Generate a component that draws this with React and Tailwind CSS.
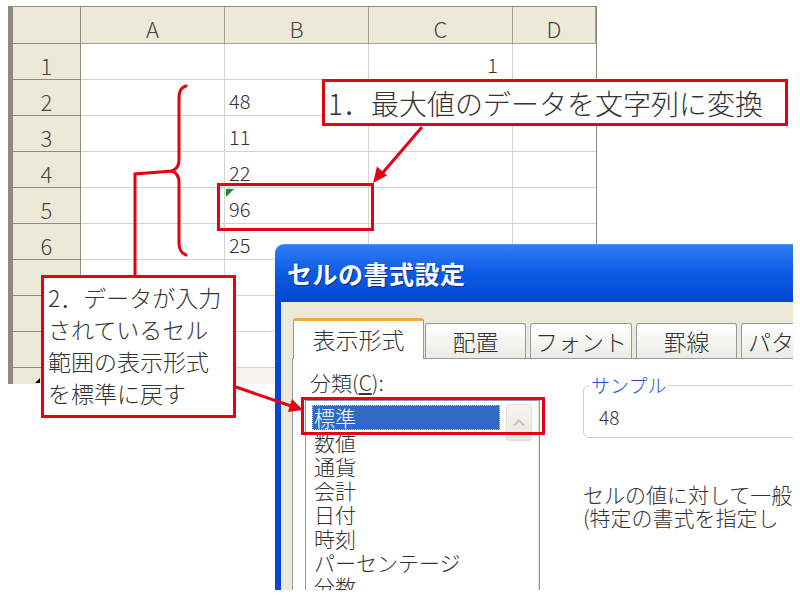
import React from 'react';

const RED = '#e60012';

const sheetRows = [
  { n: '1', c: '1' },
  { n: '2', b: '48' },
  { n: '3', b: '11' },
  { n: '4', b: '22' },
  { n: '5', b: '96', flag: true },
  { n: '6', b: '25' },
  { n: '7' },
  { n: '8' },
  { n: '9' },
];

const categories = ['数値', '通貨', '会計', '日付', '時刻', 'パーセンテージ', '分数'];

function Sheet() {
  return (
    <div className="ml-[8px] mt-[6px] w-[589px] border-l-[5px] border-t border-r border-[#8d8b80] bg-white">
      <div className="grid grid-cols-[68px_144px_144px_144px_83px]">
        <div className="h-[37px] border-r border-b border-[#8d8b80] bg-[#ece9d8]" />
        {['A', 'B', 'C', 'D'].map((c) => (
          <div key={c} className="flex h-[37px] items-center justify-center border-r border-b border-[#a19f93] bg-[#ece9d8] pt-[5px] text-[22px] leading-none text-[#444]">
            {c}
          </div>
        ))}
        {sheetRows.map((r) => (
          <React.Fragment key={r.n}>
            <div className="flex h-[36px] items-center justify-center border-r border-b border-[#8d8b80] bg-[#ece9d8] pt-[6px] text-[22px] leading-none text-[#444]">
              {r.n}
            </div>
            <div className="h-[36px] border-r border-b border-[#d2d2d2]" />
            <div className="relative flex h-[36px] items-center border-r border-b border-[#d2d2d2] pl-[4px] pt-[6px] text-[20px] leading-none text-[#333]">
              {r.flag && <span className="absolute left-[1px] top-[1px] h-0 w-0 border-t-[8px] border-r-[8px] border-t-[#1d8a2a] border-r-transparent" />}
              {r.b}
            </div>
            <div className="flex h-[36px] items-center justify-end border-r border-b border-[#d2d2d2] pr-[14px] pt-[6px] text-[20px] leading-none text-[#333]">
              {r.c}
            </div>
            <div className="h-[36px] border-b border-[#d2d2d2]" />
          </React.Fragment>
        ))}
      </div>
      <div className="flex h-[16px]">
        <div className="relative w-[68px] border-r border-[#8d8b80] bg-[#ece9d8]">
          <span className="absolute bottom-[1px] left-[22px] h-0 w-0 border-b-[5px] border-l-[5px] border-b-black border-l-transparent" />
        </div>
        <div className="flex-1 bg-[#f4f3ee]" />
      </div>
    </div>
  );
}

function Tab({ label, active, className }) {
  if (active) {
    return (
      <div className={`relative z-10 -mb-px flex h-[41px] w-[131px] shrink-0 items-center justify-center whitespace-nowrap rounded-t-[3px] border border-b-0 border-t-[3px] border-[#919b9c] border-t-[#f2a93b] bg-white pb-[2px] text-[23px] text-[#333] ${className}`}>
        {label}
      </div>
    );
  }
  return (
    <div className={`flex h-[35px] shrink-0 items-center justify-center overflow-hidden whitespace-nowrap rounded-t-[3px] border border-b-0 border-[#919b9c] bg-gradient-to-b from-white to-[#ecebe5] text-[23px] text-[#333] ${className}`}>
      {label}
    </div>
  );
}

function Dialog() {
  return (
    <div className="absolute left-[275px] top-[244px] flex h-[346px] w-[518px] flex-col overflow-hidden rounded-tl-[9px]">
      <div className="flex h-[58px] shrink-0 items-center border-t border-[#4f96f8] bg-gradient-to-b from-[#2f7cf2] via-[#0a5be6] to-[#0646cf] pl-[12px] text-[25px] font-bold tracking-[0.5px] text-white [text-shadow:1px_1px_0_#0b2f8c]">
        セルの書式設定
      </div>
      <div className="flex min-h-0 flex-1 flex-col border-l-[6px] border-[#0846d8] bg-[#ece9d8] pl-[11px] pt-[16px]">
        <div className="flex items-end">
          <Tab label="表示形式" active className="ml-[1px]" />
          <Tab label="配置" className="ml-[1px] w-[101px]" />
          <Tab label="フォント" className="ml-[4px] w-[102px]" />
          <Tab label="罫線" className="ml-[4px] w-[101px]" />
          <Tab label="パターン" className="ml-[4px] w-[101px] justify-start pl-[6px]" />
        </div>
        <div className="flex min-h-0 flex-1 border-l border-t border-[#919b9c] bg-white">
          <div className="flex w-[246px] shrink-0 flex-col pl-[12px]">
            <div className="pl-[5px] pt-[11px] text-[21px] leading-[24px] text-[#333]">
              分類(<span className="underline">C</span>):
            </div>
            <div className="mt-[6px] flex min-h-0 w-[235px] flex-1 overflow-hidden border border-b-0 border-[#7f9db9]">
              <div className="w-[194px] shrink-0 pl-[6px] pt-[4px]">
                <div className="flex h-[25px] w-[188px] items-center border border-dotted border-[#c9d6f0] bg-[#316ac5] pl-[1px] text-[21px] leading-none text-white">
                  標準
                </div>
                {categories.map((c) => (
                  <div key={c} className="h-[24px] pl-[2px] text-[21px] leading-[24px] text-[#333]">
                    {c}
                  </div>
                ))}
              </div>
              <div className="ml-[3px] w-[36px] border-r border-[#e4e2da] bg-white pl-[3px] pt-[3px]">
                <div className="flex h-[37px] w-[26px] items-center justify-center rounded-[3px] border border-[#e2e0d6] bg-gradient-to-b from-[#f6f5f0] to-[#e9e7de]">
                  <svg width="14" height="9" viewBox="0 0 14 9" fill="none">
                    <path d="M2 7.5 L7 2.5 L12 7.5" stroke="#c4c3bc" strokeWidth="2" />
                  </svg>
                </div>
              </div>
            </div>
          </div>
          <div className="ml-[44px] w-[260px] shrink-0 pt-[26px]">
            <div className="relative h-[53px] rounded-[6px] border border-[#d0d0bf] pl-[15px] pt-[20px] text-[19px] leading-[22px] text-[#333]">
              <span className="absolute -top-[13px] left-[5px] bg-white px-[2px] text-[19px] leading-[24px] text-[#1d4fd8]">サンプル</span>
              48
            </div>
            <div className="mt-[45px] whitespace-nowrap text-[21px] leading-[23px] text-[#333]">
              <div>セルの値に対して一般</div>
              <div>(特定の書式を指定し</div>
            </div>
          </div>
        </div>
      </div>
    </div>
  );
}

function Overlay() {
  return (
    <svg className="pointer-events-none absolute left-0 top-0 z-20" width="800" height="600" viewBox="0 0 800 600" fill="none">
      <rect x="218.5" y="184.5" width="154" height="45" stroke={RED} strokeWidth="3" />
      <rect x="302.5" y="398.5" width="241" height="35" stroke={RED} strokeWidth="3" />
      <path d="M186 86 C180 88 179 92 179 100 L179 160 C179 166 177 169 172 171 C177 173 179 176 179 182 L179 243 C179 250 181 253 186 255" stroke={RED} strokeWidth="3" strokeLinecap="round" />
      <path d="M173 171 L135 174 L135 276" stroke={RED} strokeWidth="3" />
      <path d="M422 127 L380 176" stroke={RED} strokeWidth="3" />
      <polygon points="373,183 387,175.5 377,166.5" fill={RED} />
      <path d="M236 387 L291 406" stroke={RED} strokeWidth="3" />
      <polygon points="303,410 288,412 292,399" fill={RED} />
    </svg>
  );
}

export default function App() {
  return (
    <div className="relative h-[600px] w-[800px] overflow-hidden bg-white font-['Noto_Sans_CJK_JP',sans-serif] font-light">
      <Sheet />
      <div className="absolute left-[322px] top-[79px] flex h-[47px] w-[466px] items-center border-[3px] border-[#e60012] bg-white pl-[3px] text-[28px] leading-none text-[#333]">
        1．最大値のデータを文字列に変換
      </div>
      <div className="absolute left-[41px] top-[275px] h-[143px] w-[195px] border-[3px] border-[#e60012] bg-white pl-[4px] pt-[3px] text-[23px] leading-[32px] text-[#333]">
        <div>2．データが入力</div>
        <div>されているセル</div>
        <div>範囲の表示形式</div>
        <div>を標準に戻す</div>
      </div>
      <Dialog />
      <Overlay />
    </div>
  );
}
